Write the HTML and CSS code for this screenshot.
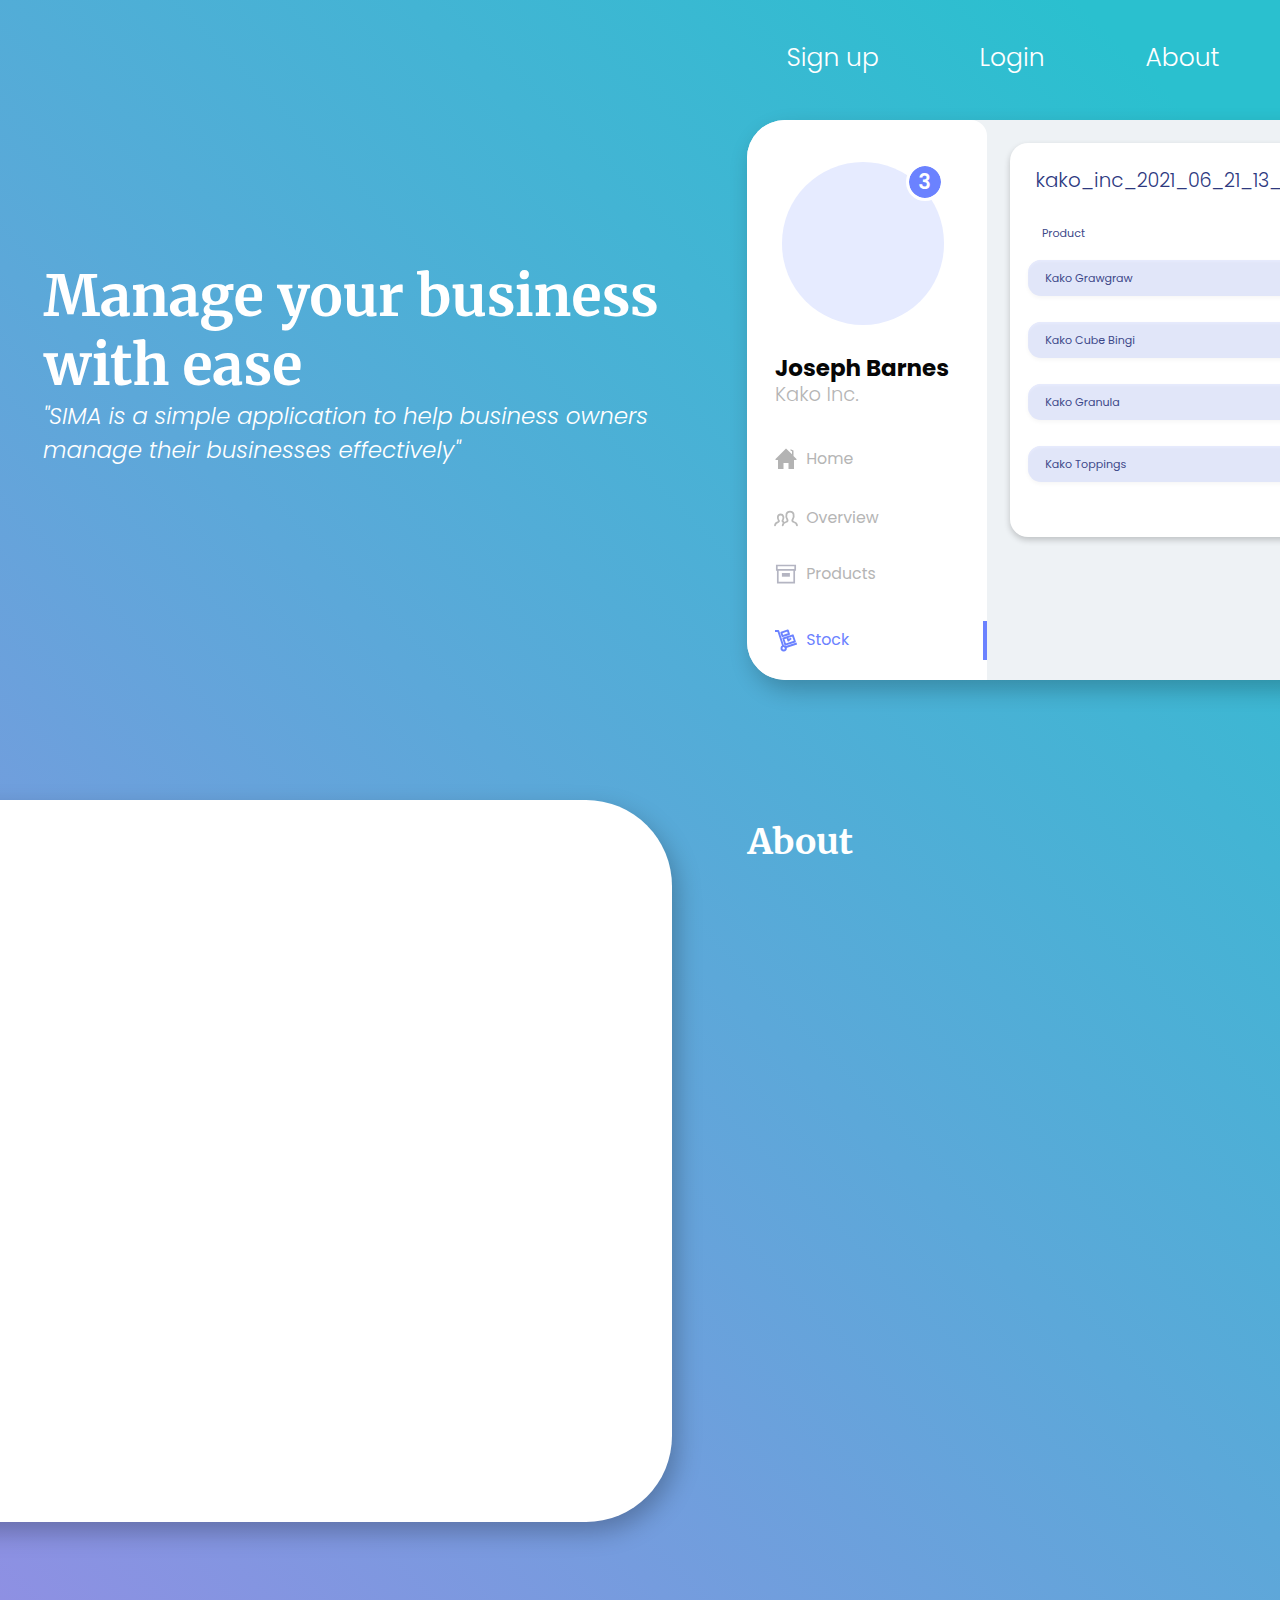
FILE: index.html
```html
<!DOCTYPE html>
<html lang="en">
<head>
<meta charset="utf-8">
<title>SIMA</title>
<link rel="stylesheet" href="styles.css">
</head>
<body>
<div class="page">
  <nav class="topnav">
    <a class="signup">Sign up</a>
    <a class="login">Login</a>
    <a class="about-link">About</a>
  </nav>
  <section class="hero">
    <div class="intro">
      <h1>Manage your business<br>with ease</h1>
      <p class="tagline">"SIMA is a simple application to help business owners<br>manage their businesses effectively"</p>
    </div>
    <div class="preview">
      <aside class="sidebar">
        <div class="avatar"><span class="badge">3</span></div>
        <div class="name">Joseph Barnes</div>
        <div class="company">Kako Inc.</div>
        <ul class="menu">
          <li class="home">
            <svg width="24" height="24" viewBox="0 0 24 24" fill="#b3b3b3"><path d="M12 1.500 1.500 12v1H4v9h5.500v-6h5v6H20v-9h2.500v-1L19.500 9V3.500L16.500 2.200v1.300l1.500.7v3z"/></svg>
            <span>Home</span>
          </li>
          <li class="overview">
            <svg width="24" height="24" viewBox="0 0 24 24" fill="none" stroke="#b9b9b9" stroke-width="1.800" stroke-linecap="round" stroke-linejoin="round"><path d="M8.700 19.300c.2-2 1.400-2.700 3.300-3.300 1.700-.6 2-1.500 1.200-2.700C12 11.500 12.100 9.600 12.500 8c.9-3.200 6.100-3.200 7 0 .4 1.600.3 3.500-.8 5.300-.8 1.200-.5 2.100 1.100 2.700 1.900.6 3 1.300 3.200 3.300M1 19.300c.2-1.900 1.200-2.600 2.900-3.200 1.300-.5 1.300-1.100.6-2.100C3.300 12.200 3.500 8.500 6.600 8.500c2.900 0 3.400 3.200 2.300 5.200-.7 1.200-.6 1.700.3 2.200"/></svg>
            <span>Overview</span>
          </li>
          <li class="products">
            <svg width="24" height="24" viewBox="0 0 24 24" fill="none" stroke="#b4b5c2" stroke-width="1.700"><path d="M2.800 3.500h18.400v4.300H2.800zM3.800 7.800h16.400v12.800H3.800z"/><path d="M8.900 12h6v1.700h-6z" stroke-width="2"/></svg>
            <span>Products</span>
          </li>
          <li class="stock">
            <svg width="24" height="24" viewBox="0 0 24 24" fill="none" stroke="#6b82ff" stroke-width="1.900" stroke-linejoin="round"><path d="M1 3h3.300l5 15.500M10.500 19.500 22.800 15.500"/><circle cx="9.700" cy="20.300" r="2.200"/><path d="m7.300 4.600 6.500-2.200 1.200 3.600-6.500 2.200zM9.300 10.500 18.800 7.300l2.100 6.200-9.600 3.200zM13.200 9.200l1.200 3.400 2.700-2.300"/></svg>
            <span>Stock</span>
          </li>
        </ul>
      </aside>
      <div class="workspace">
        <div class="sheet">
          <div class="sheet-title">kako_inc_<span class="stamp">2021_06_21_13_</span></div>
          <div class="column-head">Product</div>
          <div class="row">Kako Grawgraw</div>
          <div class="row">Kako Cube Bingi</div>
          <div class="row">Kako Granula</div>
          <div class="row">Kako Toppings</div>
        </div>
      </div>
    </div>
  </section>
  <section class="about">
    <div class="panel"></div>
    <h2>About</h2>
  </section>
</div>
</body>
</html>
```
FILE: styles.css
```css
* { box-sizing: border-box; }
body {
  margin: 0;
  font-family: Poppins, Inter, sans-serif;
}
h1, h2, p, ul { margin: 0; padding: 0; font-weight: inherit; }
.page {
  width: 1280px;
  height: 1600px;
  overflow: hidden;
  color: #fff;
  background: linear-gradient(45deg, #8e90e3 0%, #2ac0cf 93%);
}
.topnav {
  display: flex;
  height: 120px;
  padding: 38px 0 0 786.500px;
  font-size: 25px;
  font-weight: 300;
  line-height: 40px;
}
.signup { width: 193px; }
.login { width: 166px; }

.hero { display: flex; height: 680px; }
.intro { width: 747px; flex: none; padding: 142px 0 0 43px; }
h1, h2 {
  font-family: Merriweather, "DejaVu Serif", serif;
  font-weight: 700;
  white-space: nowrap;
}
h1 { padding-left: 0.500px; font-size: 55.600px; line-height: 69px; }
.tagline {
  margin-top: -1px;
  font-size: 23px;
  font-weight: 300;
  font-style: italic;
  line-height: 34px;
  white-space: nowrap;
}

.preview {
  display: flex;
  flex: none;
  width: 900px;
  height: 560px;
  border-radius: 38px;
  background: #eef2f5;
  box-shadow: 5px 10px 22px rgba(0, 0, 0, 0.22);
}
.sidebar {
  width: 240.400px;
  padding: 42px 0 0 28px;
  background: #fff;
  border-radius: 38px 16px 0 38px;
}
.avatar {
  position: relative;
  width: 162.500px;
  height: 162.500px;
  margin-left: 6.500px;
  border-radius: 50%;
  background: #e6ebff;
}
.badge {
  position: absolute;
  left: 124px;
  top: 1px;
  width: 38px;
  height: 38px;
  border: 3.500px solid #fff;
  border-radius: 50%;
  background: #6b82ff;
  background-clip: padding-box;
  font-size: 21px;
  font-weight: 600;
  line-height: 32px;
  text-align: center;
}
.name { margin-top: 31.500px; height: 25px; font-size: 23px; line-height: 25px; font-weight: 700; color: #060606; white-space: nowrap; }
.company { height: 24px; font-size: 19.500px; line-height: 27px; font-weight: 300; color: #b5b5b5; }
.menu { list-style: none; margin-top: 42px; }
.menu li {
  display: flex;
  align-items: center;
  gap: 8.200px;
  height: 24px;
  margin-left: -1px;
  font-size: 15.800px;
  line-height: 24px;
  color: #b5b5b5;
}
.menu .overview { margin-top: 35px; }
.menu .products { margin-top: 32px; }
.menu .stock { height: 39px; margin-top: 35px; padding-bottom: 1px; color: #6b82ff; border-right: 4px solid #6b82ff; }

.workspace { flex: 1; padding: 23px 0 0 23px; }
.sheet {
  height: 394px;
  padding: 23px 0 0 17.500px;
  border-radius: 18px;
  background: #fff;
  color: #3d4889;
  box-shadow: 0 3px 6px rgba(0, 0, 0, 0.2);
}
.sheet-title { height: 28px; padding-left: 7.500px; font-size: 19.900px; line-height: 28px; font-weight: 300; color: #2d397f; }
.stamp { font-size: 19.200px; letter-spacing: -0.250px; }
.column-head { margin: 30px 0 18px; padding-left: 14px; font-size: 11.100px; line-height: 18px; }
.row {
  height: 36px;
  margin-bottom: 26px;
  padding-left: 17.300px;
  border-radius: 13px;
  background: #e1e6f9;
  box-shadow: 0 2px 4px rgba(0, 0, 0, 0.04), inset 0 2px 2px #e6eafc;
  font-size: 11.100px;
  line-height: 37px;
}

.about { display: flex; }
.panel {
  width: 722px;
  height: 722px;
  margin-left: -50px;
  border-radius: 0 86px 86px 0;
  background: #fff;
  box-shadow: 5px 10px 24px rgba(0, 0, 0, 0.25);
}
h2 { margin: 18px 0 0 75.500px; font-size: 35.600px; line-height: 48px; }
```
